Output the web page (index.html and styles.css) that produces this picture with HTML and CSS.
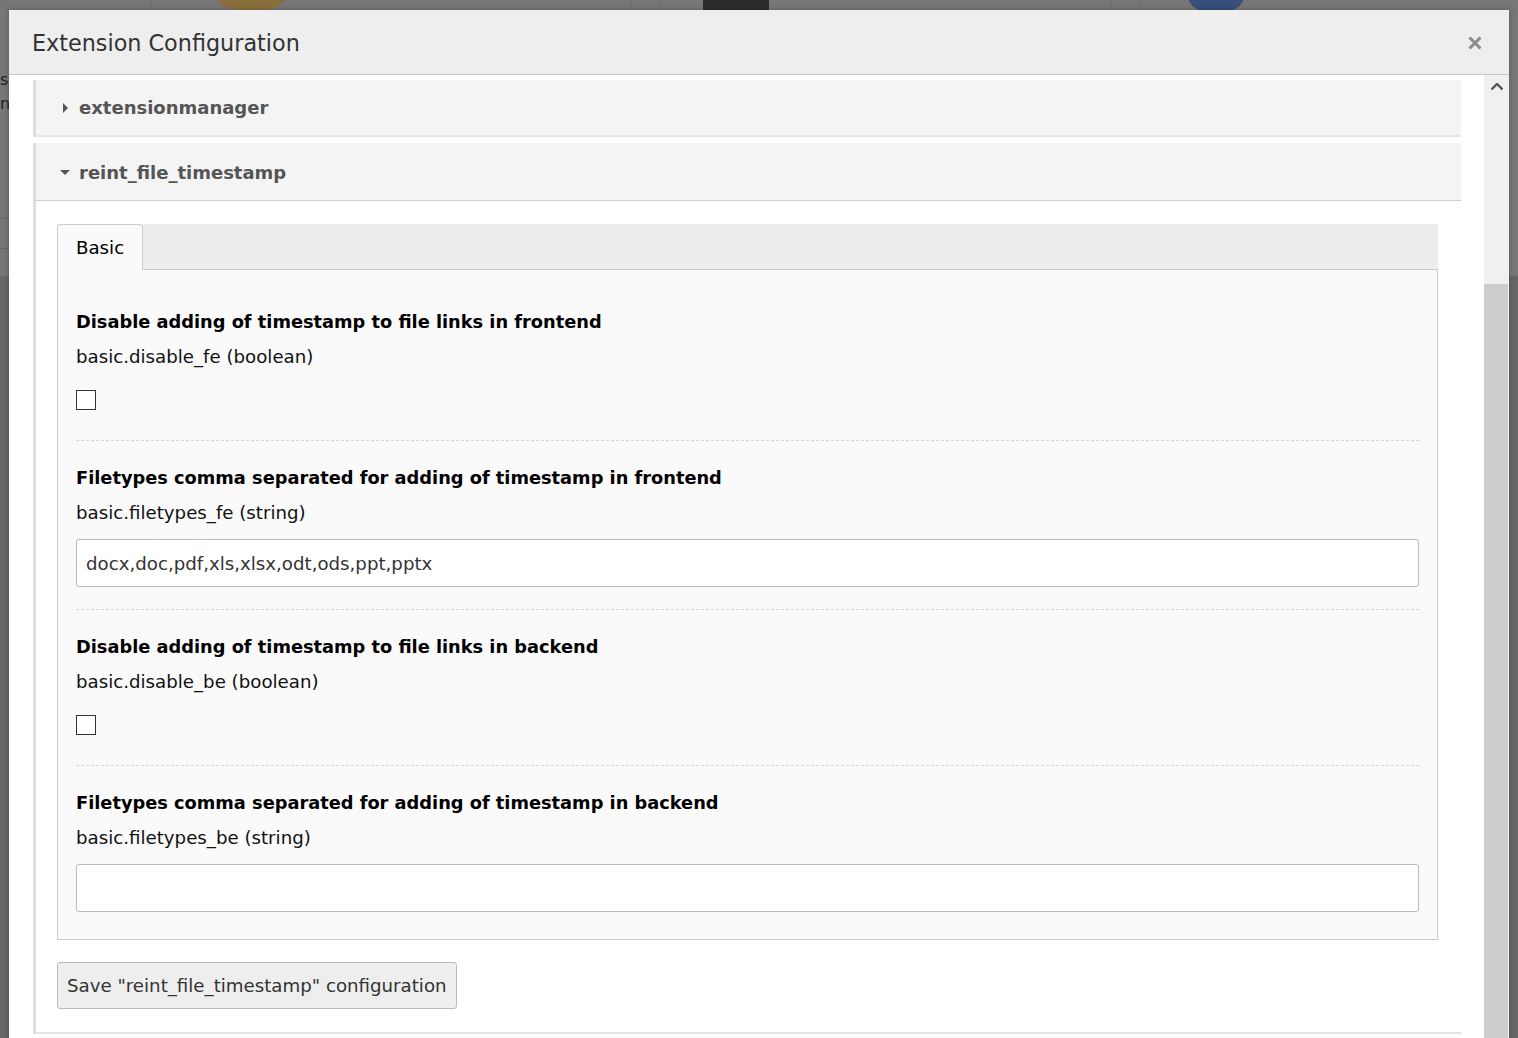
FILE: index.html
```html
<!DOCTYPE html>
<html lang="en">
<head>
<meta charset="utf-8">
<title>Extension Configuration</title>
<link rel="stylesheet" href="styles.css">
</head>
<body>
<div class="backdrop">
  <div class="bg-line l1"></div>
  <div class="bg-line l2"></div>
  <div class="bg-line l3"></div>
  <div class="bg-line l4"></div>
  <div class="bg-line l5"></div>
  <div class="bg-icon orange"></div>
  <div class="bg-icon dark"></div>
  <div class="bg-icon blue"></div>
  <div class="bg-text t1">s</div>
  <div class="bg-text t2">n</div>
  <div class="bg-hline h1"></div>
  <div class="bg-hline h2"></div>
</div>

<div class="modal">
  <div class="modal-header">
    <h4 class="modal-title">Extension Configuration</h4>
    <span class="modal-close" aria-label="Close">
      <svg width="14" height="14" viewBox="0 0 14 14"><path d="M1.5 1.5 L12.5 12.5 M12.5 1.5 L1.5 12.5" stroke="#8c8c8c" stroke-width="3" stroke-linecap="butt"/></svg>
    </span>
  </div>
  <div class="modal-main">
    <div class="modal-body">
      <div class="panel collapsed">
        <div class="panel-heading">
          <span class="caret caret-right"></span>
          <span class="panel-title">extensionmanager</span>
        </div>
      </div>
      <div class="panel open">
        <div class="panel-heading">
          <span class="caret caret-down"></span>
          <span class="panel-title">reint_file_timestamp</span>
        </div>
        <div class="panel-body">
          <div class="tabs">
            <div class="tab-nav">
              <span class="tab active">Basic</span>
            </div>
            <div class="tab-pane">
              <div class="form-group first">
                <div class="field-label">Disable adding of timestamp to file links in frontend</div>
                <div class="field-desc">basic.disable_fe (boolean)</div>
                <div class="check-wrap"><span class="checkbox"></span></div>
              </div>
              <div class="form-group">
                <div class="field-label">Filetypes comma separated for adding of timestamp in frontend</div>
                <div class="field-desc">basic.filetypes_fe (string)</div>
                <div class="text-input">docx,doc,pdf,xls,xlsx,odt,ods,ppt,pptx</div>
              </div>
              <div class="form-group">
                <div class="field-label">Disable adding of timestamp to file links in backend</div>
                <div class="field-desc">basic.disable_be (boolean)</div>
                <div class="check-wrap"><span class="checkbox"></span></div>
              </div>
              <div class="form-group last">
                <div class="field-label">Filetypes comma separated for adding of timestamp in backend</div>
                <div class="field-desc">basic.filetypes_be (string)</div>
                <div class="text-input"></div>
              </div>
            </div>
          </div>
          <div class="btn">Save "reint_file_timestamp" configuration</div>
        </div>
      </div>
    </div>
    <div class="scrollbar">
      <div class="sb-arrow">
        <svg width="12" height="8" viewBox="0 0 12 8"><path d="M0.5 6.5 L6 1 L11.5 6.5" fill="none" stroke="#555" stroke-width="2.4"/></svg>
      </div>
      <div class="sb-track"></div>
      <div class="sb-thumb"></div>
    </div>
  </div>
</div>
</body>
</html>
```

FILE: styles.css
```css
* { box-sizing: border-box; }

html, body {
  margin: 0;
  padding: 0;
  height: 1038px;
  overflow: hidden;
}

body {
  font-family: "DejaVu Sans", Verdana, sans-serif;
  font-size: 18.2px;
  color: #000;
  background: linear-gradient(#777777 0, #777777 276px, #676767 276px);
  position: relative;
}

/* dimmed page behind the modal */
.backdrop {
  position: absolute;
  inset: 0;
}
.bg-line {
  position: absolute;
  top: 0;
  width: 1px;
  height: 10px;
  background: #6a6a6a;
}
.l1 { left: 150px; }
.l2 { left: 630px; }
.l3 { left: 660px; }
.l4 { left: 1110px; }
.l5 { left: 1140px; }
.bg-icon {
  position: absolute;
  top: -22px;
  border-radius: 50%;
}
.bg-icon.orange { left: 216px; width: 70px; height: 34px; background: #8a6f3c; }
.bg-icon.dark { left: 703px; top: 0; width: 66px; height: 10px; border-radius: 0; background: #2c2c2c; }
.bg-icon.blue { left: 1188px; width: 56px; height: 36px; background: #36507a; }
.bg-text {
  position: absolute;
  left: 0;
  font-size: 16px;
  color: #222;
}
.t1 { top: 70px; }
.t2 { top: 94px; }
.bg-hline {
  position: absolute;
  left: 0;
  width: 9px;
  height: 1px;
  background: #6a6a6a;
}
.h1 { top: 218px; }
.h2 { top: 248px; }

/* modal */
.modal {
  position: absolute;
  left: 9px;
  top: 10px;
  width: 1500px;
  height: 1040px;
  background: #fff;
  display: flex;
  flex-direction: column;
  box-shadow: 0 0 6px rgba(0,0,0,0.25);
}

.modal-header {
  height: 65px;
  flex: none;
  background: #eeeeee;
  border-bottom: 1px solid #c8c8c8;
  display: flex;
  align-items: center;
  justify-content: space-between;
  padding: 0 27px 0 23px;
}
.modal-title {
  margin: 0;
  font-weight: normal;
  font-size: 22.3px;
  line-height: 28px;
  color: #333;
  padding-top: 2px;
}
.modal-close {
  display: flex;
  width: 14px;
  height: 14px;
  margin-top: 1px;
}

.modal-main {
  flex: 1;
  display: flex;
  min-height: 0;
}

.modal-body {
  flex: 1;
  padding: 5px 23px 0 24px;
  background: #fff;
  overflow: hidden;
}

.scrollbar {
  width: 25px;
  flex: none;
  background: #f0f0f0;
  display: flex;
  flex-direction: column;
}
.sb-arrow {
  height: 24px;
  display: flex;
  justify-content: center;
  padding-top: 8px;
  padding-left: 1px;
}
.sb-track { height: 185px; }
.sb-thumb {
  flex: 1;
  background: #cdcdcd;
  margin-right: 1px;
}

/* panels */
.panel {
  border-left: 3px solid #dddddd;
  border-bottom: 2px solid #e4e4e4;
  margin-bottom: 6px;
}
.panel-heading {
  height: 55px;
  background: #f4f4f4;
  display: flex;
  align-items: center;
  padding-left: 23px;
}
.panel.open .panel-heading {
  height: 58px;
  border-bottom: 1px solid #cccccc;
  padding-top: 2px;
}
.caret {
  width: 12px;
  height: 12px;
  display: flex;
  align-items: center;
  justify-content: center;
  margin-right: 8px;
}
.caret-right::before {
  content: "";
  border-left: 5px solid #555;
  border-top: 5px solid transparent;
  border-bottom: 5px solid transparent;
}
.caret-down::before {
  content: "";
  border-top: 5px solid #555;
  border-left: 5px solid transparent;
  border-right: 5px solid transparent;
}
.panel-title {
  font-weight: bold;
  font-size: 18px;
  color: #555;
}

.panel-body {
  padding: 23px 23px 23px 21px;
  background: #fff;
}

/* tabs */
.tab-nav {
  height: 46px;
  background: #ededed;
  border-bottom: 1px solid #cccccc;
  display: flex;
}
.tab {
  height: 46px;
  padding: 0 18px;
  display: flex;
  align-items: center;
  background: #fafafa;
  border: 1px solid #cccccc;
  border-bottom: none;
  border-radius: 4px 4px 0 0;
  color: #000;
}
.tab-pane {
  background: #fafafa;
  border: 1px solid #cccccc;
  border-top: none;
  padding: 0 18px;
}

.form-group {
  padding: 25px 0 22px;
  border-top: 1px dashed #d6d6d6;
}
.form-group.first {
  padding-top: 40px;
  border-top: none;
}
.form-group.last { padding-bottom: 27px; }

.field-label {
  font-weight: bold;
  font-size: 17.8px;
  line-height: 24px;
  color: #000;
}
.field-desc {
  margin-top: 11px;
  line-height: 24px;
  color: #111;
}
.check-wrap {
  margin-top: 14px;
  padding: 7px 0 8px;
  display: flex;
}
.checkbox {
  width: 20px;
  height: 20px;
  border: 1px solid #333;
  background: #fff;
}
.text-input {
  margin-top: 14px;
  height: 48px;
  border: 1px solid #bbbbbb;
  border-radius: 3px;
  background: #fff;
  padding: 0 9px;
  display: flex;
  align-items: center;
  color: #333;
}

.btn {
  display: inline-flex;
  align-items: center;
  margin-top: 22px;
  height: 47px;
  padding: 0 9px;
  background: #eeeeee;
  border: 1px solid #bbbbbb;
  border-radius: 3px;
  color: #333;
}
```
